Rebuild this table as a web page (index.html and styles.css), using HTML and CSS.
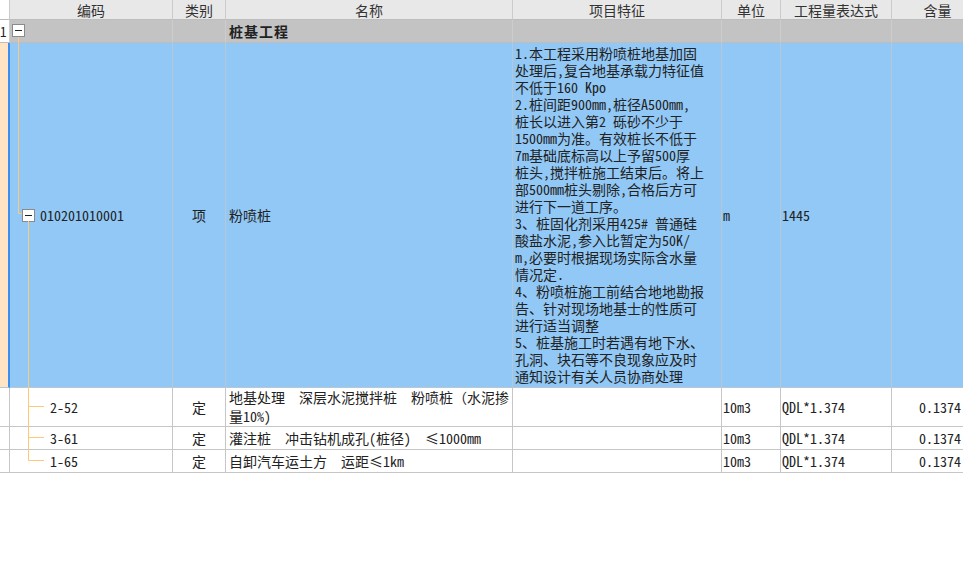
FILE: index.html
```html
<!DOCTYPE html>
<html lang="zh-CN">
<head>
<meta charset="utf-8">
<title>清单</title>
<link rel="stylesheet" href="styles.css">
</head>
<body>
<div class="sheet">
  <div class="grid">
    <div class="c h num"></div>
    <div class="c h">编码</div>
    <div class="c h">类别</div>
    <div class="c h">名称</div>
    <div class="c h">项目特征</div>
    <div class="c h">单位</div>
    <div class="c h">工程量表达式</div>
    <div class="c h">含量</div>

    <div class="c g num">1</div>
    <div class="c g code0"><span class="box"></span></div>
    <div class="c g"></div>
    <div class="c g name bold">桩基工程</div>
    <div class="c g"></div>
    <div class="c g"></div>
    <div class="c g"></div>
    <div class="c g"></div>

    <div class="c b num sel"></div>
    <div class="c b code1"><span class="box"></span><span>010201010001</span></div>
    <div class="c b ctr">项</div>
    <div class="c b name">粉喷桩</div>
    <div class="c b feat">1.本工程采用粉喷桩地基加固<br>处理后,复合地基承载力特征值<br>不低于160 Kpo<br>2.桩间距900mm,桩径A500mm,<br>桩长以进入第2 砾砂不少于<br>1500mm为准。有效桩长不低于<br>7m基础底标高以上予留500厚<br>桩头,搅拌桩施工结束后。将上<br>部500mm桩头剔除,合格后方可<br>进行下一道工序。<br>3、桩固化剂采用425# 普通硅<br>酸盐水泥,参入比暂定为50K/<br>m,必要时根据现场实际含水量<br>情况定.<br>4、粉喷桩施工前结合地地勘报<br>告、针对现场地基士的性质可<br>进行适当调整<br>5、桩基施工时若遇有地下水、<br>孔洞、块石等不良现象应及时<br>通知设计有关人员协商处理</div>
    <div class="c b unit">m</div>
    <div class="c b expr">1445</div>
    <div class="c b"></div>

    <div class="c w num"></div>
    <div class="c w code2">2-52</div>
    <div class="c w ctr">定</div>
    <div class="c w name wrap">地基处理  深层水泥搅拌桩  粉喷桩（水泥掺<br>量10%)</div>
    <div class="c w"></div>
    <div class="c w unit">10m3</div>
    <div class="c w expr">QDL*1.374</div>
    <div class="c w qty">0.1374</div>

    <div class="c w num"></div>
    <div class="c w code2">3-61</div>
    <div class="c w ctr">定</div>
    <div class="c w name">灌注桩  冲击钻机成孔(桩径)  ≤1000mm</div>
    <div class="c w"></div>
    <div class="c w unit">10m3</div>
    <div class="c w expr">QDL*1.374</div>
    <div class="c w qty">0.1374</div>

    <div class="c w num"></div>
    <div class="c w code2">1-65</div>
    <div class="c w ctr">定</div>
    <div class="c w name">自卸汽车运土方  运距≤1km</div>
    <div class="c w"></div>
    <div class="c w unit">10m3</div>
    <div class="c w expr">QDL*1.374</div>
    <div class="c w qty">0.1374</div>
  </div>
  <svg class="tree" width="60" height="480" viewBox="0 0 60 480">
    <g stroke="#ffc878" stroke-width="1" fill="none">
      <path d="M18.5 37 V213.5 H22"/>
      <path d="M28.5 221 V460.5 H44"/>
      <path d="M28.5 406.5 H44"/>
      <path d="M28.5 437.5 H44"/>
    </g>
  </svg>
</div>
</body>
</html>
```
FILE: styles.css
```css
* { box-sizing: border-box; }
html, body { margin: 0; padding: 0; background: #fff; }
body {
  font-family: "Noto Sans Mono CJK SC", "Noto Sans CJK SC", monospace;
  font-size: 14px;
  color: #222;
}
.sheet {
  position: relative;
  width: 963px;
  height: 565px;
  overflow: hidden;
}
.grid {
  display: grid;
  grid-template-columns: 10px 163px 53px 287px 209px 59px 111px 92px;
  grid-template-rows: 20px 23px 345px 39px 23px 23px;
  width: 984px;
}
.c {
  border-right: 1px solid #c6c6c6;
  border-bottom: 1px solid #c6c6c6;
  display: flex;
  align-items: center;
  padding: 0 2px;
  white-space: pre;
  overflow: hidden;
  line-height: 17px;
}
.h {
  background: #e8e8e8;
  color: #333;
  justify-content: center;
  border-right-color: #cbcbcb;
  border-bottom-color: #bdbdbd;
  line-height: 18px;
}
.g {
  background: #c3c3c3;
  border-right-color: #cdcdcd;
  border-bottom-color: #bdbdbd;
}
.b {
  background: #91c8f6;
  border-right-color: #b7c7d6;
  border-bottom-color: #b7c7d6;
}
.w { background: #fff; }
.num { padding: 0; background: #fff; }
.g.num { background: #fff; font-size: 13px; }
.b.num.sel {
  background: #ffe5c4;
  border-right: 2px solid #3b8ff0;
}
.bold { font-weight: bold; letter-spacing: 1px; }
.name { padding-left: 3px; }
.ctr { justify-content: center; }
.box {
  width: 13px;
  height: 13px;
  border: 1px solid #8a8a8a;
  background: #fff;
  position: relative;
  flex: none;
}
.box::after {
  content: "";
  position: absolute;
  left: 2px;
  right: 2px;
  top: 5px;
  height: 1px;
  background: #222;
}
.code0 { padding-left: 2px; align-items: flex-start; padding-top: 4px; }
.code1 { padding-left: 12px; gap: 5px; }
.code2 { padding-left: 40px; }
.feat { padding: 0 2px 0 2px; align-items: center; line-height: 17px; }
.wrap { line-height: 19px; }
.unit { padding-left: 1px; }
.expr { padding-left: 1px; }
.qty { justify-content: flex-end; padding-right: 22px; }
.tree {
  position: absolute;
  left: 0;
  top: 0;
  pointer-events: none;
}
```
